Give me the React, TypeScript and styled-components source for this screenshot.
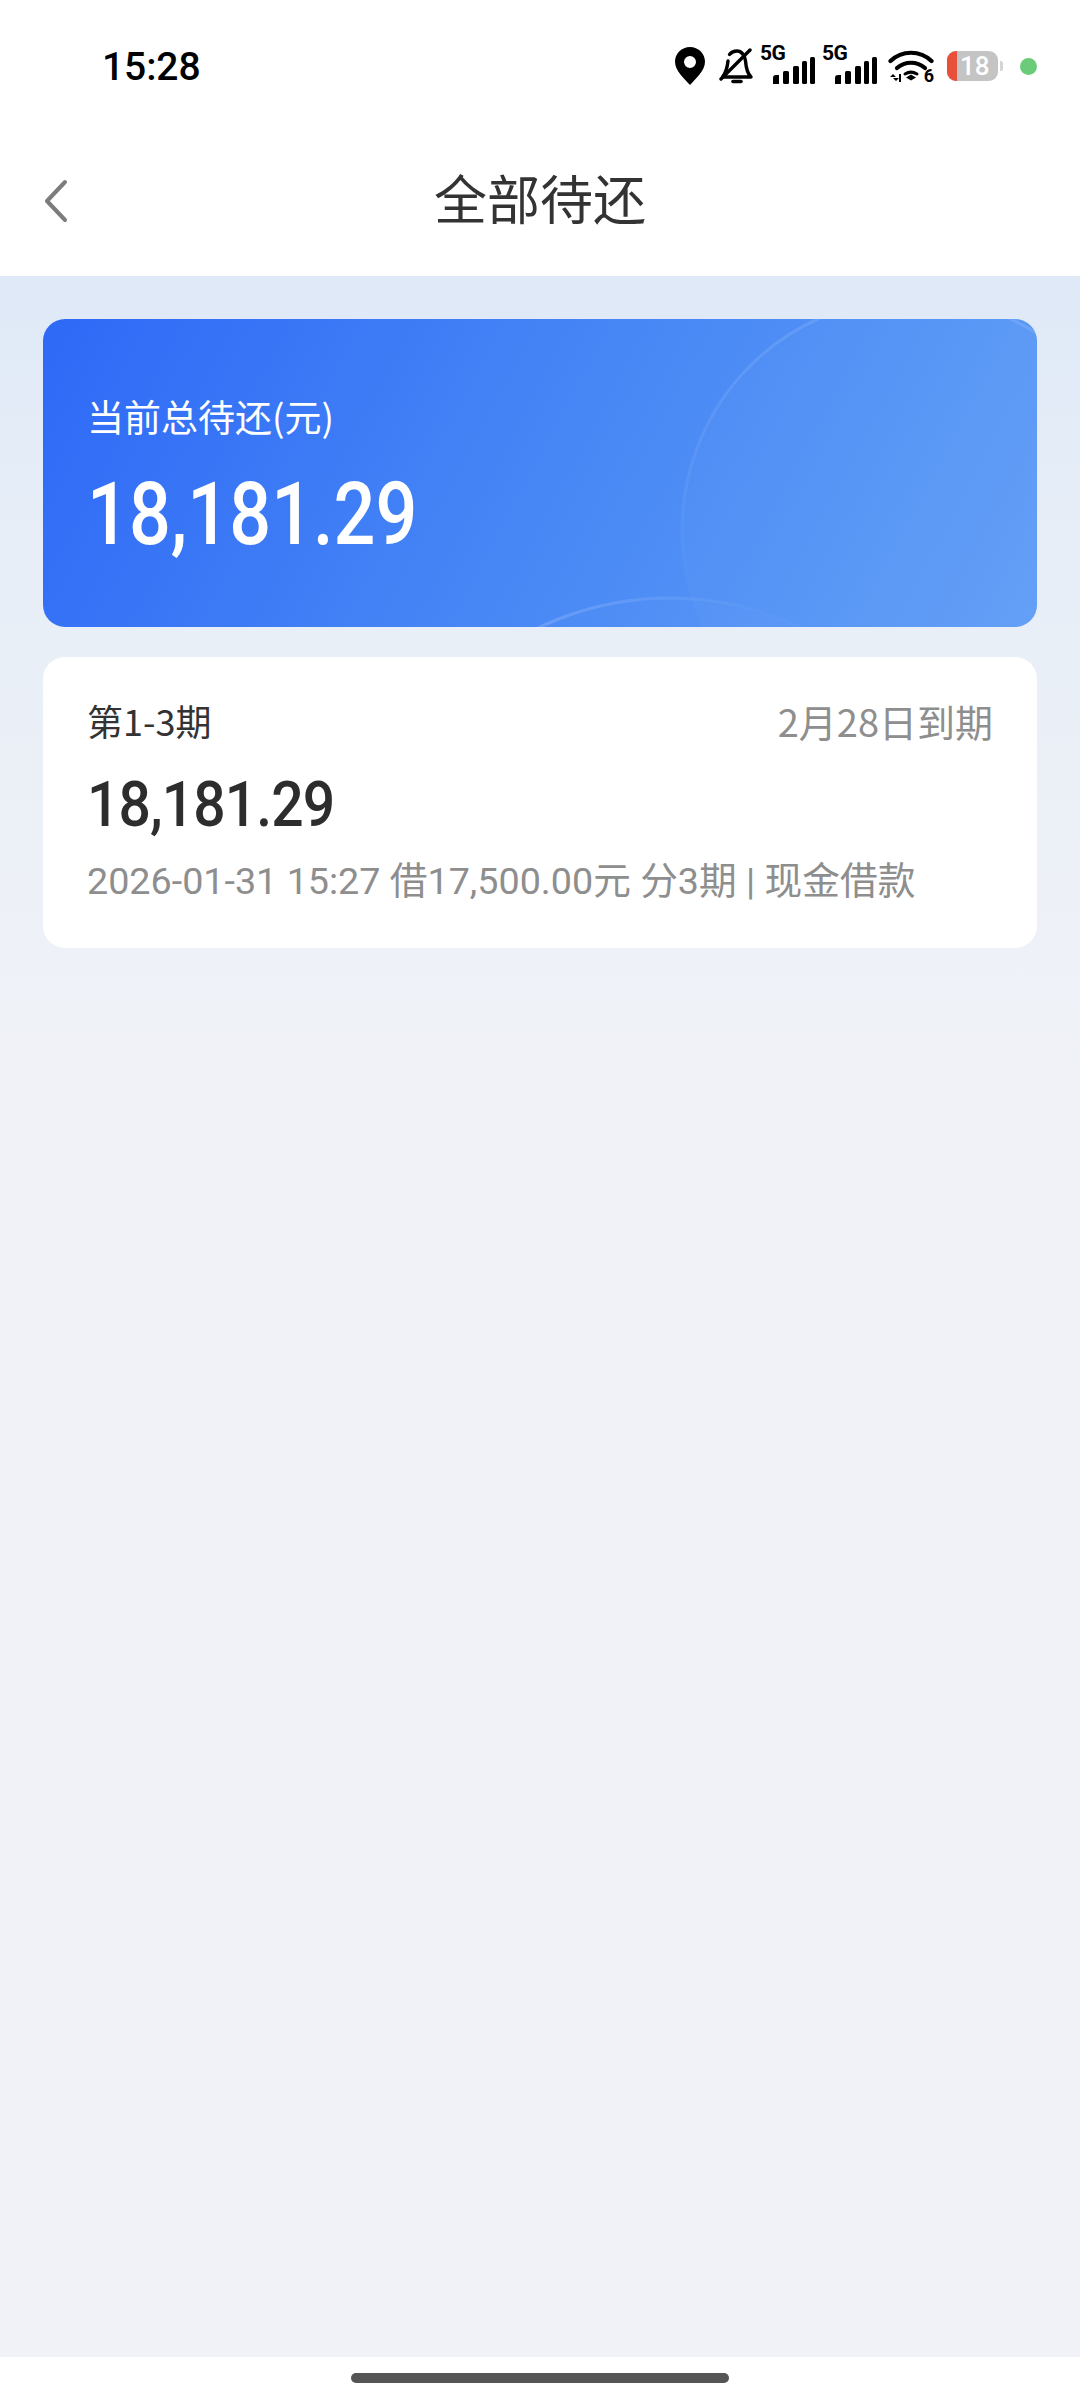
import styled, { createGlobalStyle } from "styled-components";

const GlobalStyle = createGlobalStyle`
  html, body {
    margin: 0;
    padding: 0;
    background: #fff;
    font-family: Roboto, "Noto Sans CJK SC", sans-serif;
  }
  * { box-sizing: border-box; }
`;

const Page = styled.div`
  width: 1080px;
  height: 2400px;
  display: flex;
  flex-direction: column;
  overflow: hidden;
`;

const StatusBar = styled.div`
  height: 112px;
  padding: 0 43px 0 102px;
  display: flex;
  align-items: center;
  justify-content: space-between;
  background: #fff;
  color: #000;
`;

const Clock = styled.div`
  font-size: 39px;
  font-weight: 500;
  line-height: 38px;
  margin-top: 21px;
  letter-spacing: -0.1px;
`;

const StatusIcons = styled.div`
  display: flex;
  align-items: center;
  height: 40px;
  margin-top: 20px;
`;

const Signal = styled.div`
  position: relative;
  width: 55px;
  height: 36px;
  margin-left: 7px;
`;

const FiveG = styled.span`
  position: absolute;
  left: 0;
  top: -5px;
  font-size: 21px;
  line-height: 20px;
  font-weight: 700;
  letter-spacing: -0.5px;
`;

const Wifi = styled.div`
  position: relative;
  width: 46px;
  height: 34px;
  margin-left: 11px;
`;

const WifiSix = styled.span`
  position: absolute;
  right: 0;
  bottom: -1px;
  font-size: 18px;
  line-height: 17px;
  font-weight: 700;
`;

const Battery = styled.div`
  width: 51px;
  height: 30px;
  margin-left: 13px;
  border-radius: 9px;
  overflow: hidden;
  background: #c4c4c4;
  display: flex;
  color: #fff;
  font-size: 26px;
  font-weight: 500;
  line-height: 30px;
`;

const BatteryFill = styled.div`
  width: 10px;
  background: #e8503a;
  margin-right: 3px;
`;

const BatteryNub = styled.div`
  width: 3px;
  height: 10px;
  margin-left: 2px;
  border-radius: 0 2px 2px 0;
  background: #d4d4d4;
`;

const PrivacyDot = styled.div`
  width: 17px;
  height: 17px;
  margin-left: 17px;
  border-radius: 50%;
  background: #6acb78;
`;

const NavBar = styled.div`
  position: relative;
  height: 164px;
  display: flex;
  align-items: center;
  justify-content: center;
  background: #fff;
`;

const BackIcon = styled.svg`
  position: absolute;
  left: 43px;
  top: 67px;
  width: 26px;
  height: 44px;
`;

const Title = styled.h1`
  margin: 0;
  font-family: "Noto Sans CJK SC", sans-serif;
  font-size: 53px;
  font-weight: 400;
  line-height: 70px;
  color: #333;
  margin-top: 5px;
`;

const Content = styled.main`
  flex: 1;
  padding: 43px 43px 0;
  display: flex;
  flex-direction: column;
  gap: 30px;
  background: linear-gradient(180deg, #dfe9f7 0, #e9eff7 360px, #f0f2f7 800px, #f1f2f7 100%);
`;

const SummaryCard = styled.section`
  position: relative;
  height: 308px;
  padding: 72px 44px 0;
  border-radius: 22px;
  overflow: hidden;
  color: #fff;
  background: linear-gradient(118deg, #2e69f7 0%, #4585f5 48%, #619ff6 100%);
`;

const CardArt = styled.svg`
  position: absolute;
  left: 0;
  top: 0;
  width: 100%;
  height: 100%;
`;

const SummaryLabel = styled.div`
  position: relative;
  font-family: "Noto Sans CJK SC", sans-serif;
  font-size: 37px;
  line-height: 50px;
`;

const SummaryAmount = styled.div`
  position: relative;
  margin-top: 28px;
  font-size: 88px;
  font-weight: 500;
  line-height: 90px;
  transform: scaleX(0.838);
  transform-origin: left center;
`;

const BillCard = styled.section`
  height: 291px;
  padding: 37px 44px 0;
  border-radius: 22px;
  background: #fff;
`;

const BillHead = styled.div`
  display: flex;
  justify-content: space-between;
  align-items: center;
  height: 52px;
  font-family: "Noto Sans CJK SC", sans-serif;
`;

const Period = styled.span`
  color: #333;
  font-size: 36px;
`;

const DueDate = styled.span`
  color: #8e8e8e;
  font-size: 38px;
`;

const BillAmount = styled.div`
  margin-top: 24px;
  font-size: 63px;
  font-weight: 500;
  line-height: 70px;
  color: #2d2d2d;
  letter-spacing: -1px;
  transform: scaleX(0.905);
  transform-origin: left center;
`;

const BillMeta = styled.div`
  margin-top: 16px;
  font-size: 37.700px;
  line-height: 50px;
  color: #8e8e8e;
  white-space: nowrap;
`;

const HomeArea = styled.div`
  height: 43px;
  padding-top: 16px;
  display: flex;
  justify-content: center;
  background: #fff;
`;

const HomePill = styled.div`
  width: 378px;
  height: 10px;
  border-radius: 5px;
  background: #555;
`;

function SignalBars() {
  return (
    <svg width="42" height="27" viewBox="0 0 42 27" style={{ position: "absolute", right: 0, bottom: 0 }}>
      <path d="M0 21 a3 3 0 0 1 3-3 h3 v9 H0z" fill="#000" />
      <rect x="10" y="14" width="6" height="13" rx="1.500" />
      <rect x="20" y="9" width="6" height="18" rx="1.500" />
      <rect x="29" y="4" width="5" height="23" rx="1.500" />
      <rect x="37" y="0" width="5" height="27" rx="1.500" />
    </svg>
  );
}

function App() {
  return (
    <Page>
      <GlobalStyle />
      <StatusBar>
        <Clock>15:28</Clock>
        <StatusIcons>
          <svg width="30" height="38" viewBox="0 0 30 38">
            <path
              fillRule="evenodd"
              d="M15 0C6.700 0 0 6.500 0 14.600 0 24 9 31.500 15 38c6-6.500 15-14 15-23.400C30 6.500 23.300 0 15 0zm0 9a6 6 0 1 1 0 12 6 6 0 0 1 0-12z"
            />
          </svg>
          <svg width="34" height="36" viewBox="0 0 34 36" fill="none" stroke="#000" strokeWidth="3.400" strokeLinecap="round" strokeLinejoin="round" style={{ marginLeft: 14 }}>
            <path d="M9 13c-.6 6-1.500 11-5.500 16H32c-4-4-5-10-5.500-16C26 7 22 3 18 3c-3 0-5.500 1-7.500 3.500" />
            <path d="M31 2 2 31" />
            <path d="M14 33.500h8" strokeWidth="3.600" />
          </svg>
          <Signal>
            <FiveG>5G</FiveG>
            <SignalBars />
          </Signal>
          <Signal>
            <FiveG>5G</FiveG>
            <SignalBars />
          </Signal>
          <Wifi>
            <svg width="46" height="34" viewBox="0 0 46 34" fill="none" stroke="#000" strokeWidth="4.200" strokeLinecap="round">
              <path d="M2.500 12C14 1 32 1 43.500 12" />
              <path d="M9 19c8-7 20-7 28 0" />
              <path d="M17 25c4-2.500 8-2.500 12 0" strokeWidth="3" />
              <path d="M23 25.500l5 3-5 3-5-3z" fill="#000" stroke="none" />
              <path d="M3 28l3-3 3 3zM12 29l-3 3-3-3z" transform="translate(-1 0)" fill="#000" stroke="none" />
              <path d="M12 25v8" strokeWidth="2" strokeLinecap="butt" />
            </svg>
            <WifiSix>6</WifiSix>
          </Wifi>
          <Battery>
            <BatteryFill />
            18
          </Battery>
          <BatteryNub />
          <PrivacyDot />
        </StatusIcons>
      </StatusBar>

      <NavBar>
        <BackIcon viewBox="0 0 26 44" fill="none" stroke="#7c7c7c" strokeWidth="4" strokeLinecap="round" strokeLinejoin="round">
          <path d="M22 3 4 22l18 19" />
        </BackIcon>
        <Title>全部待还</Title>
      </NavBar>

      <Content>
        <SummaryCard>
          <CardArt viewBox="0 0 994 308" fill="none">
            <defs>
              <linearGradient id="arcFade" x1="0" y1="0" x2="0" y2="1">
                <stop offset="0" stopColor="#fff" stopOpacity="0.12" />
                <stop offset="0.7" stopColor="#fff" stopOpacity="0.01" />
              </linearGradient>
              <linearGradient id="lowFade" x1="0" y1="0" x2="1" y2="0">
                <stop offset="0.3" stopColor="#fff" stopOpacity="0.16" />
                <stop offset="0.65" stopColor="#fff" stopOpacity="0.02" />
              </linearGradient>
            </defs>
            <circle cx="871" cy="211" r="232" fill="#fff" fillOpacity="0.02" stroke="url(#arcFade)" strokeWidth="3" />
            <circle cx="627" cy="585" r="306" fill="#fff" fillOpacity="0.015" stroke="url(#lowFade)" strokeWidth="3" />
          </CardArt>
          <SummaryLabel>当前总待还(元)</SummaryLabel>
          <SummaryAmount>18,181.29</SummaryAmount>
        </SummaryCard>

        <BillCard>
          <BillHead>
            <Period>第1-3期</Period>
            <DueDate>2月28日到期</DueDate>
          </BillHead>
          <BillAmount>18,181.29</BillAmount>
          <BillMeta>2026-01-31 15:27 借17,500.00元 分3期 | 现金借款</BillMeta>
        </BillCard>
      </Content>

      <HomeArea>
        <HomePill />
      </HomeArea>
    </Page>
  );
}

export default App;
